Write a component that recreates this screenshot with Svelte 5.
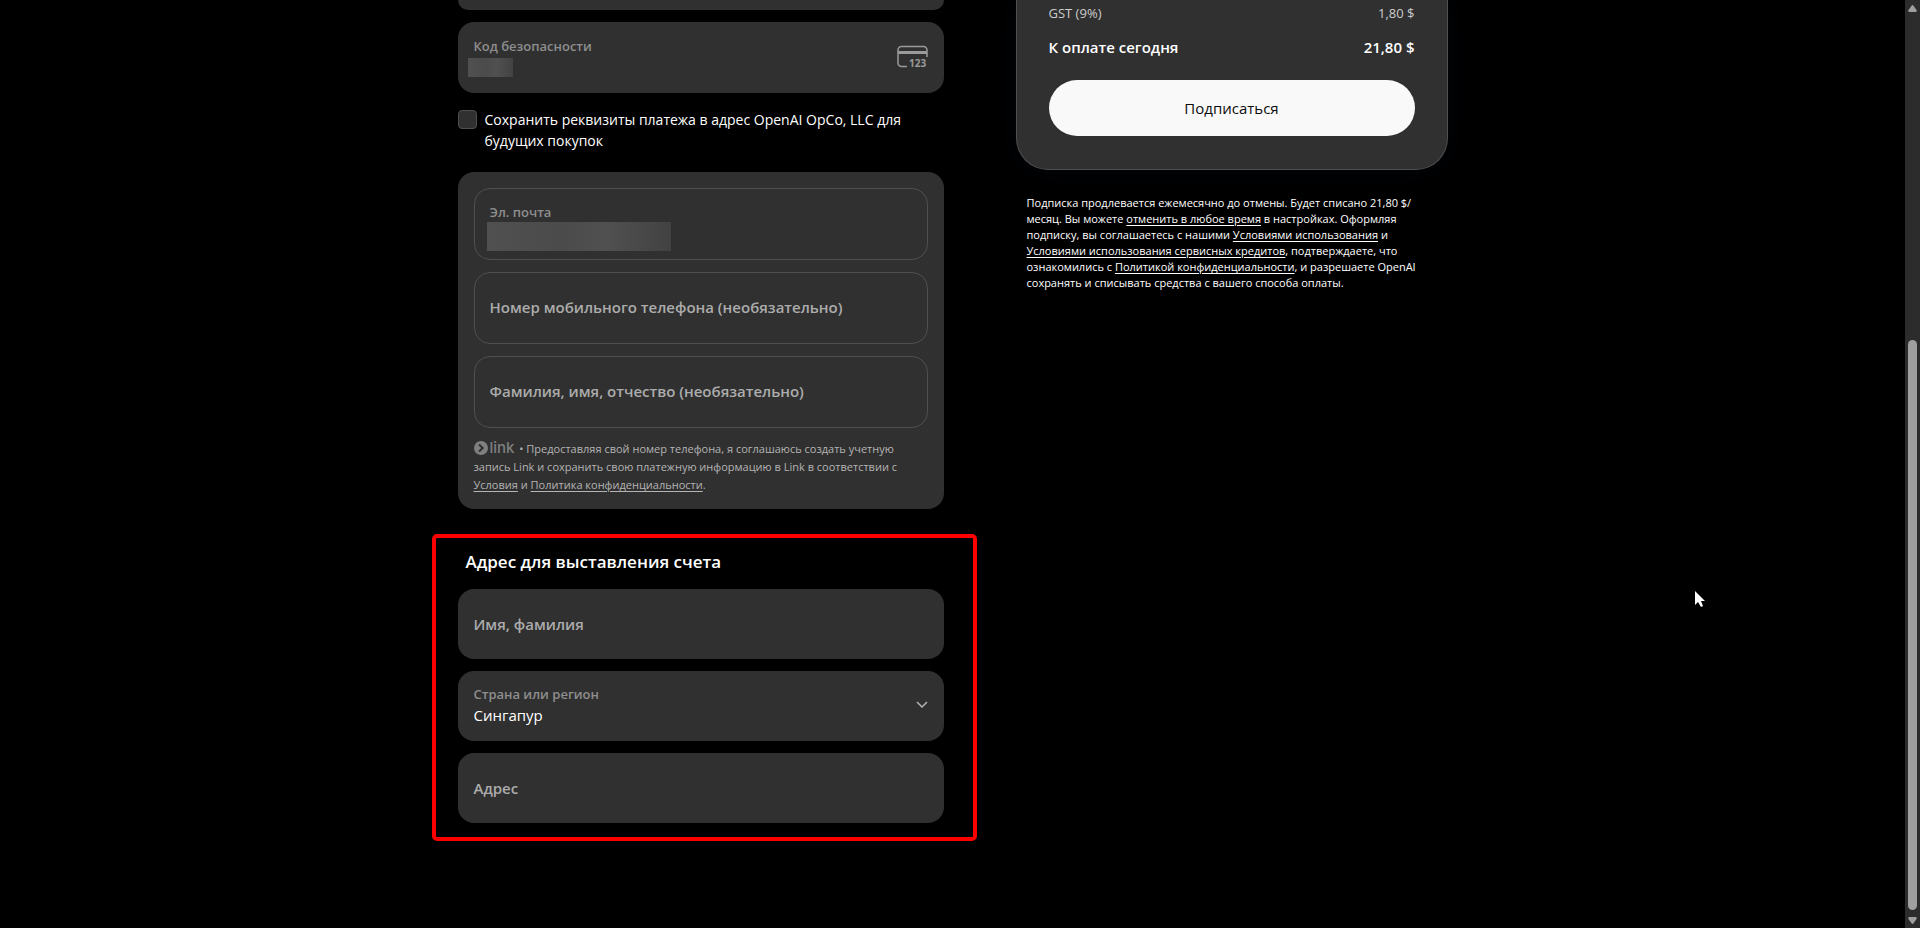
<script lang="ts">
  let cvc = '';
  let saveDetails = false;
  let email = '';
  let phone = '';
  let fullName = '';
  let billingName = '';
  let country = 'SG';
  let address = '';
</script>

<div class="page">
  <main>
    <div class="checkout">
      <form class="payment" on:submit|preventDefault>
        <div class="field-end"></div>

        <div class="field double">
          <label for="cvc">Код безопасности</label>
          <input id="cvc" type="text" bind:value={cvc} />
          <span class="mask mask-cvc"></span>
          <svg class="card-icon" viewBox="0 0 32 24" aria-hidden="true">
            <path
              d="M11 21.5H5.5A3.5 3.5 0 0 1 2 18V5a3.5 3.5 0 0 1 3.5-3.5h22A3.5 3.5 0 0 1 31 5v7"
              fill="none"
              stroke="currentColor"
              stroke-width="1.5"
            />
            <path d="M2 6h29v3H2z" fill="currentColor" />
            <text x="13" y="22">123</text>
          </svg>
        </div>

        <label class="save">
          <input type="checkbox" bind:checked={saveDetails} />
          <span>Сохранить реквизиты платежа в адрес OpenAI OpCo, LLC для<br />будущих покупок</span>
        </label>

        <div class="link-panel">
          <div class="field outlined double">
            <label for="email">Эл. почта</label>
            <input id="email" type="email" bind:value={email} />
            <span class="mask mask-email"></span>
          </div>
          <div class="field outlined">
            <label for="phone">Номер мобильного телефона (необязательно)</label>
            <input id="phone" type="tel" bind:value={phone} />
          </div>
          <div class="field outlined">
            <label for="full-name">Фамилия, имя, отчество (необязательно)</label>
            <input id="full-name" type="text" bind:value={fullName} />
          </div>
          <p class="link-terms">
            <span class="link-logo">
              <svg viewBox="0 0 14 14" aria-hidden="true">
                <circle cx="7" cy="7" r="7" fill="currentColor" />
                <path d="M5 3.5 8.7 7 5 10.5" fill="none" stroke="#303030" stroke-width="2" />
              </svg>link</span>
            • Предоставляя свой номер телефона, я соглашаюсь создать учетную<br />
            запись Link и сохранить свою платежную информацию в Link в соответствии с<br />
            <a href="#terms">Условия</a> и <a href="#privacy">Политика конфиденциальности</a>.
          </p>
        </div>

        <section class="billing">
          <h2>Адрес для выставления счета</h2>
          <div class="field">
            <label for="billing-name">Имя, фамилия</label>
            <input id="billing-name" type="text" bind:value={billingName} />
          </div>
          <div class="field double">
            <label for="country">Страна или регион</label>
            <select id="country" bind:value={country}>
              <option value="SG">Сингапур</option>
            </select>
            <svg class="chevron" viewBox="0 0 12 8" aria-hidden="true">
              <path d="m1 1 5 5 5-5" fill="none" stroke="currentColor" stroke-width="1.5" />
            </svg>
          </div>
          <div class="field">
            <label for="address">Адрес</label>
            <input id="address" type="text" bind:value={address} />
          </div>
        </section>
      </form>

      <aside>
        <div class="summary">
          <div class="row tax"><span>GST (9%)</span><span>1,80 $</span></div>
          <div class="row total"><span>К оплате сегодня</span><span>21,80 $</span></div>
          <button type="button">Подписаться</button>
        </div>
        <p class="legal">
          Подписка продлевается ежемесячно до отмены. Будет списано 21,80 $/<br />
          месяц. Вы можете <a href="#cancel">отменить в любое время</a> в настройках. Оформляя<br />
          подписку, вы соглашаетесь с нашими <a href="#use">Условиями использования</a> и<br />
          <a href="#credits">Условиями использования сервисных кредитов</a>, подтверждаете, что<br />
          ознакомились с <a href="#policy">Политикой конфиденциальности</a>, и разрешаете OpenAI<br />
          сохранять и списывать средства с вашего способа оплаты.
        </p>
      </aside>
    </div>
  </main>

  <div class="scrollbar" aria-hidden="true">
    <svg viewBox="0 0 9 7"><path d="M3.5.7q1-1.2 2 0l3.2 4.5Q9 7 7.5 7h-6Q0 7 .3 5.2z" /></svg>
    <span class="thumb"></span>
    <svg viewBox="0 0 9 7"><path d="M3.5 6.3q1 1.2 2 0l3.2-4.5Q9 0 7.5 0h-6Q0 0 .3 1.8z" /></svg>
  </div>

  <svg class="cursor" viewBox="0 0 10 17" aria-hidden="true">
    <path d="M0 0v14l3-3 3 5 2-1-2-5h4z" fill="#fff" />
  </svg>
</div>

<style>
  :global(body) {
    background: #000;
  }

  .page {
    position: relative;
    display: flex;
    height: 100vh;
    overflow: hidden;
    color: #fff;
    background: #000;
    font-family: 'Segoe UI', 'Open Sans', 'Noto Sans', sans-serif;
    font-size: 15px;
  }

  main {
    flex: 1;
    min-width: 0;
  }

  .checkout {
    display: grid;
    grid-template-columns: minmax(0, 9fr) minmax(0, 8fr);
    column-gap: 72px;
    max-width: 990px;
    margin: 0 auto;
  }

  .field-end {
    height: 10px;
    margin-bottom: 12px;
    border-radius: 0 0 16px 16px;
    background: #303030;
  }

  .field {
    position: relative;
    display: grid;
    grid-template-columns: minmax(0, 1fr) auto;
    align-content: center;
    box-sizing: border-box;
    height: 71px;
    padding: 0 16px;
    border-radius: 16px;
    background: #303030;
  }

  .field label {
    grid-area: 1 / 1;
    color: #acacac;
    font-weight: 600;
    line-height: 21px;
    white-space: nowrap;
  }

  .field input,
  .field select {
    grid-area: 1 / 1;
    width: 100%;
    height: 21px;
    padding: 0;
    border: 0;
    outline: 0;
    appearance: none;
    color: #fff;
    background: transparent;
    font: inherit;
    line-height: 21px;
  }

  .field.double {
    padding-bottom: 2px;
  }

  .field.double label {
    color: #8e8e8e;
    font-size: 13px;
  }

  .field.double input,
  .field.double select {
    grid-area: 2 / 1;
  }

  .field.outlined {
    height: 72px;
    padding: 0 15px 2px;
    border: 1px solid #4f4f4f;
  }

  .mask {
    position: absolute;
    background: linear-gradient(90deg, #505050, #4b4b4b 40%, #505050 65%, #424242);
  }

  .mask-cvc {
    top: 36px;
    left: 10px;
    width: 45px;
    height: 19px;
  }

  .mask-email {
    top: 33px;
    left: 12px;
    width: 184px;
    height: 29px;
  }

  .card-icon {
    grid-area: 1 / 2 / span 2;
    align-self: center;
    width: 32px;
    height: 24px;
    color: #9a9a9a;
  }

  .card-icon text {
    fill: currentColor;
    font-size: 10px;
    font-weight: 700;
  }

  .save {
    display: flex;
    align-items: flex-start;
    gap: 8px;
    margin: 16px 0 21px;
    font-size: 14px;
    line-height: 21px;
    white-space: nowrap;
  }

  .save input {
    box-sizing: border-box;
    flex: none;
    width: 19px;
    height: 19px;
    margin: 1px 0;
    border: 1px solid #4f4f4f;
    border-radius: 4px;
    appearance: none;
    background: #303030;
  }

  .link-panel {
    display: grid;
    grid-template-columns: minmax(0, 1fr);
    gap: 12px;
    padding: 16px 16px 15px;
    border-radius: 16px;
    background: #303030;
  }

  .link-terms {
    margin: 0;
    color: #b4b4b4;
    font-size: 11px;
    line-height: 18px;
    white-space: nowrap;
  }

  .link-logo {
    margin-right: 2px;
    color: #7f7f7f;
    font-family: Inter, sans-serif;
    font-size: 15px;
    font-weight: 500;
    line-height: 16px;
  }

  .link-logo svg {
    width: 14px;
    height: 14px;
    margin-right: 2px;
    vertical-align: -2px;
  }

  a {
    color: inherit;
    text-underline-offset: 2px;
  }

  .billing {
    position: relative;
    display: grid;
    gap: 12px;
    margin-top: 41px;
  }

  .billing .field {
    height: 70px;
  }

  .billing::after {
    content: '';
    position: absolute;
    inset: -16px -33px -18px -26px;
    border: 4px solid #f00;
    border-radius: 5px;
    pointer-events: none;
  }

  h2 {
    margin: 0;
    padding: 0 8px 3px;
    font-size: 17px;
    font-weight: 600;
    line-height: 24px;
  }

  .chevron {
    grid-area: 1 / 2 / span 2;
    align-self: center;
    width: 12px;
    height: 8px;
    color: #b4b4b4;
  }

  .summary {
    padding: 0 32px 33px;
    border: 1px solid #4f4f4f;
    border-top: 0;
    border-radius: 0 0 32px 32px;
    background: #303030;
    box-shadow: 0 0 24px #04060c;
  }

  .row {
    display: flex;
    justify-content: space-between;
  }

  .tax {
    padding-top: 3px;
    color: #cdcdcd;
    font-size: 13px;
    line-height: 20px;
  }

  .total {
    margin: 12px 0 21px;
    font-weight: 600;
    line-height: 24px;
  }

  button {
    width: 100%;
    height: 56px;
    padding: 0;
    border: 0;
    border-radius: 28px;
    color: #0d0d0d;
    background: #f9f9f9;
    font: inherit;
    font-weight: 500;
  }

  .legal {
    margin: 25px 0 0;
    padding-left: 11px;
    font-size: 11px;
    line-height: 16px;
    white-space: nowrap;
  }

  .scrollbar {
    display: flex;
    flex-direction: column;
    align-items: center;
    gap: 7px;
    box-sizing: border-box;
    width: 15px;
    padding: 5px 0 4px;
    background: #2c2c2c;
  }

  .scrollbar svg {
    flex: none;
    width: 9px;
    height: 7px;
    fill: #9f9f9f;
  }

  .thumb {
    width: 9px;
    height: 62%;
    margin-top: auto;
    border-radius: 5px;
    background: #9f9f9f;
  }

  .cursor {
    position: absolute;
    top: 591px;
    left: 1695px;
    width: 10px;
    height: 17px;
  }
</style>
